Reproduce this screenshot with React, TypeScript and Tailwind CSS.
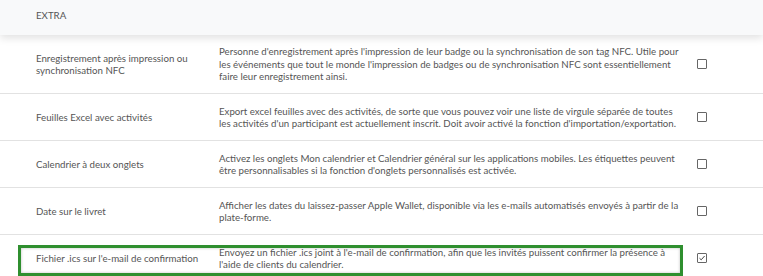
import React from 'react'

const rows = [
  {
    label: 'Enregistrement après impression ou synchronisation NFC',
    desc: "Personne d'enregistrement après l'impression de leur badge ou la synchronisation de son tag NFC. Utile pour les événements que tout le monde l'impression de badges ou de synchronisation NFC sont essentiellement faire leur enregistrement ainsi.",
    checked: false,
  },
  {
    label: 'Feuilles Excel avec activités',
    desc: "Export excel feuilles avec des activités, de sorte que vous pouvez voir une liste de virgule séparée de toutes les activités d'un participant est actuellement inscrit. Doit avoir activé la fonction d'importation/exportation.",
    checked: false,
  },
  {
    label: 'Calendrier à deux onglets',
    desc: "Activez les onglets Mon calendrier et Calendrier général sur les applications mobiles. Les étiquettes peuvent être personnalisables si la fonction d'onglets personnalisés est activée.",
    checked: false,
  },
  {
    label: 'Date sur le livret',
    desc: 'Afficher les dates du laissez-passer Apple Wallet, disponible via les e-mails automatisés envoyés à partir de la plate-forme.',
    checked: false,
  },
  {
    label: "Fichier .ics sur l'e-mail de confirmation",
    desc: "Envoyez un fichier .ics joint à l'e-mail de confirmation, afin que les invités puissent confirmer la présence à l'aide de clients du calendrier.",
    checked: true,
  },
]

function Box({ checked }: { checked: boolean }) {
  return (
    <div className="w-[10px] h-[10px] border border-[#666] rounded-[1px] bg-white flex items-center justify-center">
      {checked && (
        <svg width="8" height="8" viewBox="0 0 8 8" fill="none">
          <path d="M1.5 4.2 L3.2 5.8 L6.6 2" stroke="#444" strokeWidth="1" />
        </svg>
      )}
    </div>
  )
}

export default function App() {
  return (
    <div className="w-[763px] h-[276px] overflow-hidden bg-white text-[#555] text-[9.7px] leading-[12.5px]" style={{ fontFamily: 'Lato, "Open Sans", sans-serif' }}>
      <div className="relative z-10 h-[35px] bg-[#f8f9fa] pl-[36px] pt-[9px] shadow-[0_3px_8px_rgba(0,0,0,0.12)] text-[#555]">
        EXTRA
      </div>
      {rows.map((r, i) => (
        <div
          key={r.label}
          className={`relative grid grid-cols-[36px_183px_460px_1fr] items-center border-b border-[#e2e2e2] ${i === 0 ? 'h-[59px]' : 'h-[47px]'}`}
        >
          <div />
          <div className="pr-2">{r.label}</div>
          <div>{r.desc}</div>
          <div className="pl-[18px]">
            <Box checked={r.checked} />
          </div>
          {r.checked && (
            <div className="absolute left-[18px] top-[10px] w-[665px] h-[31px] border-[3px] border-[#2f8f2f] shadow-[inset_0_0_3px_rgba(0,0,0,0.25)]" />
          )}
        </div>
      ))}
    </div>
  )
}
